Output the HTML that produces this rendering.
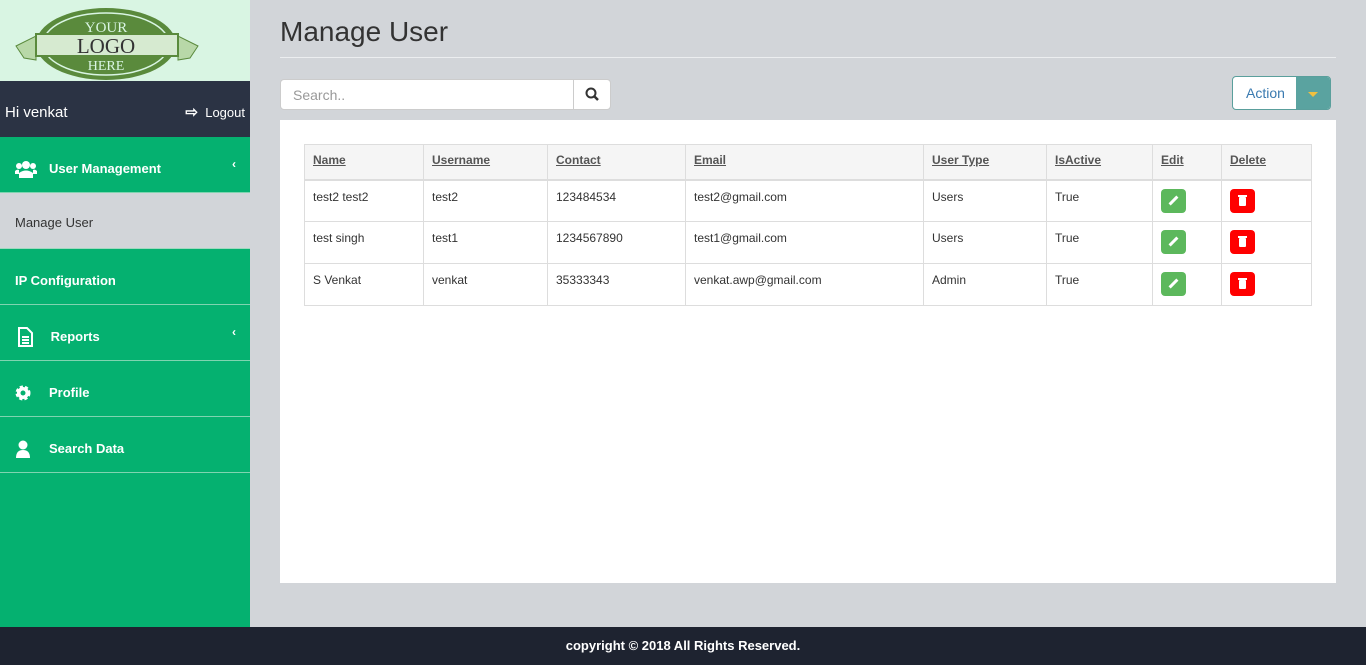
<!DOCTYPE html>
<html><head><meta charset="utf-8"><style>
*{box-sizing:border-box;margin:0;padding:0}
body{width:1366px;height:665px;overflow:hidden;background:#d2d5d9;font-family:"Liberation Sans",Arial,sans-serif;position:relative}
.sb{position:absolute;left:0;top:0;width:250px;height:627px;background:#05b170}
.logo{height:81px;background:#d9f5e3;position:relative}
.hd{height:56px;background:#2b3344;color:#fff;display:flex;align-items:center;justify-content:space-between;padding:6px 5px 0;font-size:15px}
.it{height:56px;border-bottom:1px solid #7fd4b0;color:#fff;font-weight:bold;font-size:13px;display:flex;align-items:center;padding-left:15px;padding-top:8px;position:relative}
.it svg{margin-right:12px}
.it .ch{position:absolute;right:14px;top:20px;font-size:12px}
.sub{height:56px;background:#d2d5d9;color:#333;font-size:13px;display:flex;align-items:center;padding-left:15px;padding-top:3px;border-bottom:1px solid #9fd9bf}
h1{position:absolute;left:280px;top:16px;font-weight:normal;font-size:28px;color:#333}
.hr{position:absolute;left:280px;top:57px;width:1056px;height:1px;background:#eceef0}
.srch{position:absolute;left:280px;top:79px;width:331px;height:31px;background:#fff;border:1px solid #ccc;border-radius:4px;font-size:14px;color:#999;padding:7px 12px}
.srch .b{position:absolute;right:0;top:0;width:37px;height:29px;border-left:1px solid #ccc}
.act{position:absolute;left:1232px;top:76px;width:99px;height:34px;border:1px solid #5a9f9c;border-radius:4px;background:#fff;overflow:hidden}
.act span{position:absolute;left:13px;top:8px;font-size:14px;color:#3a7ab0}
.act i{position:absolute;right:0;top:0;width:34px;height:34px;background:#5aa3a0}
.act i:after{content:"";position:absolute;left:12px;top:15px;border:5px solid transparent;border-top:5px solid #f0c040;border-bottom:0}
.pn{position:absolute;left:280px;top:120px;width:1056px;height:463px;background:#fff}
table{position:absolute;left:24px;top:24px;width:1008px;border-collapse:collapse;font-size:12px;color:#333}
td,th{border:1px solid #ddd;padding:8px 8px 0;text-align:left;height:42px;vertical-align:top;line-height:17px}
th{height:35px;background:#f5f5f5;border-bottom:2px solid #ddd;text-decoration:underline;color:#555;padding-top:7px}
.e,.d{display:inline-block;width:25px;height:24px;border-radius:4px;vertical-align:top;position:relative}
.e{background:#5cb85c}.d{background:#f00}
.e:after{content:"";position:absolute;left:11px;top:6px;width:3px;height:11px;background:#fff;transform:rotate(45deg)}
.d:after{content:"";position:absolute;left:9px;top:8px;width:7px;height:9px;background:#fff;border-radius:1px}
.d:before{content:"";position:absolute;left:8px;top:6px;width:9px;height:2px;background:#fff}
.ft{position:absolute;left:0;top:627px;width:1366px;height:38px;background:#1e2330;color:#fff;font-weight:bold;font-size:13px;text-align:center;line-height:38px}
</style></head><body>
<div class="sb">
<div class="logo"><svg width="250" height="81">
<ellipse cx="106" cy="44" rx="70" ry="36" fill="#5a8a3c"/><ellipse cx="106" cy="44" rx="63" ry="31" fill="none" stroke="#d9f5e3" stroke-width="1.5"/>
<polygon points="16,46 36,36 36,60 24,58" fill="#b8d8a8" stroke="#5a8a3c"/><polygon points="198,46 178,36 178,60 190,58" fill="#b8d8a8" stroke="#5a8a3c"/>
<rect x="36" y="34" width="142" height="22" fill="#d6ead0" stroke="#5a8a3c" stroke-width="2"/>
<text x="106" y="32" font-family="Liberation Serif" font-size="15" fill="#d9f5e3" text-anchor="middle">YOUR</text>
<text x="106" y="53" font-family="Liberation Serif" font-size="21" fill="#333" text-anchor="middle">LOGO</text>
<text x="106" y="70" font-family="Liberation Serif" font-size="14" fill="#d9f5e3" text-anchor="middle">HERE</text></svg></div>
<div class="hd"><span>Hi venkat</span><span style="font-size:13px"><b style="font-size:15px">⇨</b>&nbsp; Logout</span></div>
<div class="it"><svg width="22" height="18" viewBox="0 0 22 18" fill="#fff"><circle cx="11" cy="5" r="4"/><circle cx="4" cy="6" r="3"/><circle cx="18" cy="6" r="3"/><path d="M4 18v-5q7-5 14 0v5z"/><path d="M0 14v-3q2-2 4-1v4zM22 14v-3q-2-2-4-1v4z"/></svg>User Management<span class="ch">‹</span></div>
<div class="sub">Manage User</div>
<div class="it">IP Configuration</div>
<div class="it"><svg width="20" height="20" viewBox="0 0 20 20" fill="none" stroke="#fff" stroke-width="2"><path d="M4 1h8l5 5v13H4z"/><path d="M7 10h7M7 13h7M7 16h7"/></svg>&nbsp;Reports<span class="ch">‹</span></div>
<div class="it"><svg width="22" height="18" viewBox="0 0 22 18"><circle cx="8" cy="9" r="6" fill="#fff" stroke="#fff" stroke-width="3" stroke-dasharray="3 2"/><circle cx="8" cy="9" r="2.5" fill="#05b170"/></svg>Profile</div>
<div class="it"><svg width="22" height="18" viewBox="0 0 22 18" fill="#fff"><circle cx="8" cy="5" r="4.5"/><path d="M1 18q0-8 7-8t7 8z"/></svg>Search Data</div>
</div>
<h1>Manage User</h1><div class="hr"></div>
<div class="srch">Search..<div class="b"><svg width="37" height="29"><circle cx="17" cy="13" r="4.5" fill="none" stroke="#333" stroke-width="2"/><path d="M20 16l4 4" stroke="#333" stroke-width="2.5"/></svg></div></div>
<div class="act"><span>Action</span><i></i></div>
<div class="pn"><table>
<tr><th style="width:119px">Name</th><th style="width:124px">Username</th><th style="width:138px">Contact</th><th style="width:238px">Email</th><th style="width:123px">User Type</th><th style="width:106px">IsActive</th><th style="width:69px">Edit</th><th>Delete</th></tr>
<tr><td>test2 test2</td><td>test2</td><td>123484534</td><td>test2@gmail.com</td><td>Users</td><td>True</td><td><span class="e"></span></td><td><span class="d"></span></td></tr>
<tr><td>test singh</td><td>test1</td><td>1234567890</td><td>test1@gmail.com</td><td>Users</td><td>True</td><td><span class="e"></span></td><td><span class="d"></span></td></tr>
<tr><td>S Venkat</td><td>venkat</td><td>35333343</td><td>venkat.awp@gmail.com</td><td>Admin</td><td>True</td><td><span class="e"></span></td><td><span class="d"></span></td></tr>
</table></div>
<div class="ft">copyright © 2018 All Rights Reserved.</div>
</body></html>
